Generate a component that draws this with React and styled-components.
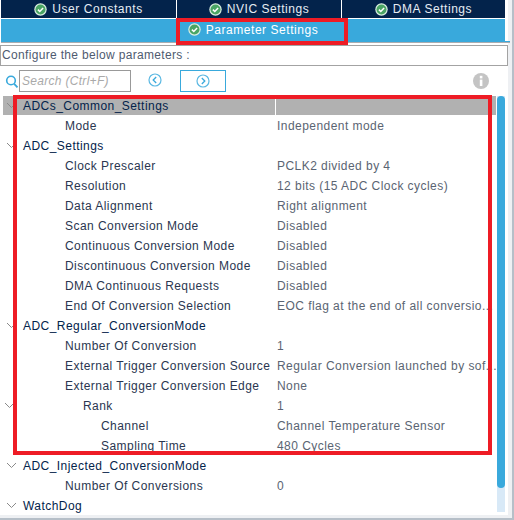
import React from 'react';
import styled, { createGlobalStyle } from 'styled-components';

const GlobalStyle = createGlobalStyle`
  html, body {
    margin: 0;
    padding: 0;
    background: #fff;
  }
`;

const Page = styled.div`
  position: relative;
  width: 514px;
  height: 520px;
  overflow: hidden;
  background: #fff;
  font-family: "Liberation Sans", Arial, sans-serif;
  font-size: 13px;
  display: flex;
  flex-direction: column;
`;

const Outer = styled.div`
  width: 514px;
  height: 520px;
  background: #eef0f3;
  border-bottom: 2px solid #b6bfc8;
  border-right: 2px solid #b6bfc8;
  box-sizing: border-box;
`;

const Frame = styled.div`
  width: 508px;
  height: 515px;
  display: flex;
  flex-direction: column;
  background: #fff;
  flex: none;
`;

const TopTabs = styled.div`
  height: 19px;
  margin-left: 1px;
  width: 504px;
  display: grid;
  grid-template-columns: 175px 165px 164px;
  background: #03234b;
  border-bottom: 1px solid #fff;
  box-sizing: border-box;
`;

const TopTab = styled.div`
  display: flex;
  align-items: center;
  justify-content: center;
  gap: 5px;
  color: #e6edf3;
  letter-spacing: 0.55px;
  font-size: 12px;
  border-left: ${p => (p.$first ? 'none' : '1px solid #fff')};
`;

const SubTabs = styled.div`
  height: 22px;
  margin-left: 1px;
  width: 504px;
  background: #39a9dc;
  display: flex;
  justify-content: center;
  align-items: center;
  color: #fff;
  font-size: 12px;
  letter-spacing: 0.55px;
  padding-bottom: 1px;
  box-sizing: border-box;
  flex: none;
`;

const SubTabInner = styled.div`
  display: flex;
  align-items: center;
  gap: 5px;
`;

const BlueEdge = styled.div`
  height: 2px;
  width: 509px;
  margin-left: 1px;
  background: linear-gradient(#39a9dc 50%, #a9acb0 50%);
  flex: none;
`;

const Rule = styled.div`
  height: 2px;
  background: #fff;
  flex: none;
`;

const ConfigBox = styled.div`
  height: 21px;
  width: 508px;
  box-sizing: border-box;
  border: 1px solid #a3a3a3;
  color: #4f5b70;
  font-size: 12px;
  letter-spacing: 0.33px;
  line-height: 19px;
  padding-left: 1px;
  flex: none;
`;

const Toolbar = styled.div`
  height: 30px;
  display: flex;
  align-items: center;
  padding-left: 5px;
  flex: none;
`;

const SearchBox = styled.div`
  width: 112px;
  height: 22px;
  margin-left: 0;
  box-sizing: border-box;
  border: 1px solid #999;
  color: #a9a9a9;
  font-style: italic;
  font-size: 12px;
  letter-spacing: 0.3px;
  line-height: 20px;
  padding-left: 2px;
`;

const PrevButton = styled.div`
  width: 16px;
  height: 16px;
  margin-left: 17px;
  display: flex;
`;

const NextButton = styled.div`
  width: 46px;
  height: 22px;
  margin-left: 16px;
  box-sizing: border-box;
  border: 1px solid #39a9dc;
  display: flex;
  align-items: center;
  justify-content: center;
`;

const InfoIcon = styled.div`
  margin-left: auto;
  margin-right: 19px;
  width: 16px;
  height: 16px;
  display: flex;
`;

const TableArea = styled.div`
  flex: 1;
  min-height: 0;
  display: flex;
`;

const TreeColumn = styled.div`
  width: 496px;
  overflow: hidden;
  padding-left: 3px;
  box-sizing: border-box;
  height: 419px;
  flex: none;
`;

const Row = styled.div`
  height: 20px;
  display: grid;
  grid-template-columns: 272px 1fr;
  align-items: start;
  background: ${p => (p.$selected ? 'linear-gradient(#b1b1b1 19px, transparent 19px)' : 'transparent')};
`;

const NameCell = styled.div`
  position: relative;
  height: 20px;
  line-height: 20px;
  padding-left: ${p => [20, 62, 80, 98][p.$level]}px;
  color: ${p => (p.$level === 0 ? '#03234b' : '#2a3650')};
  font-size: 12px;
  letter-spacing: 0.45px;
  white-space: nowrap;
`;

const ValueCell = styled.div`
  height: 19px;
  line-height: 20px;
  padding-left: 1px;
  border-left: ${p => (p.$selected ? '1px solid #fff' : '1px solid transparent')};
  color: #5a6472;
  font-size: 12px;
  letter-spacing: 0.45px;
  white-space: nowrap;
  overflow: hidden;
`;

const Caret = styled.svg`
  position: absolute;
  left: ${p => p.$left}px;
  top: 6px;
`;

const ScrollTrack = styled.div`
  width: 8px;
  margin-left: 1px;
  height: 416px;
  background: #d8e9f7;
  flex: none;
`;

const ScrollThumb = styled.div`
  height: 392px;
  background: #39a9dc;
  border-radius: 4px;
`;

const Highlight = styled.div`
  position: absolute;
  left: ${p => p.$x}px;
  top: ${p => p.$y}px;
  width: ${p => p.$w}px;
  height: ${p => p.$h}px;
  box-sizing: border-box;
  border: 4px solid #ee1c25;
  pointer-events: none;
`;

const Check = () => (
  <svg width="13" height="13" viewBox="0 0 13 13">
    <circle cx="6.5" cy="6.5" r="6.2" fill="#dcefe2" />
    <circle cx="6.5" cy="6.5" r="5" fill="#4aa564" />
    <path d="M3.9 6.6 L5.8 8.5 L9.1 4.9" fill="none" stroke="#fff" strokeWidth="1.5" />
  </svg>
);

const SearchIcon = () => (
  <svg width="14" height="15" viewBox="0 0 14 15">
    <circle cx="6" cy="6.5" r="4.3" fill="none" stroke="#39a9dc" strokeWidth="1.6" />
    <path d="M9.2 9.8 L12.5 13.3" stroke="#39a9dc" strokeWidth="1.8" />
  </svg>
);

const Nav = ({ dir }) => (
  <svg width="14" height="14" viewBox="0 0 14 14">
    <circle cx="7" cy="7" r="6" fill="none" stroke="#5bb8e2" strokeWidth="1.2" />
    <path d={dir === 'left' ? 'M8.2 4 L5.2 7 L8.2 10' : 'M5.8 4 L8.8 7 L5.8 10'} fill="none" stroke="#39a9dc" strokeWidth="1.3" />
  </svg>
);

const Info = () => (
  <svg width="16" height="16" viewBox="0 0 16 16">
    <circle cx="8" cy="8" r="8" fill="#c4c4c4" />
    <rect x="6.8" y="2.8" width="2.6" height="2.6" fill="#fff" />
    <rect x="6.8" y="6.6" width="2.6" height="6.4" fill="#fff" />
  </svg>
);

const rows = [
  { name: 'ADCs_Common_Settings', level: 0, caret: true, selected: true },
  { name: 'Mode', value: 'Independent mode', level: 1 },
  { name: 'ADC_Settings', level: 0, caret: true },
  { name: 'Clock Prescaler', value: 'PCLK2 divided by 4', level: 1 },
  { name: 'Resolution', value: '12 bits (15 ADC Clock cycles)', level: 1 },
  { name: 'Data Alignment', value: 'Right alignment', level: 1 },
  { name: 'Scan Conversion Mode', value: 'Disabled', level: 1 },
  { name: 'Continuous Conversion Mode', value: 'Disabled', level: 1 },
  { name: 'Discontinuous Conversion Mode', value: 'Disabled', level: 1 },
  { name: 'DMA Continuous Requests', value: 'Disabled', level: 1 },
  { name: 'End Of Conversion Selection', value: 'EOC flag at the end of all conversio...', level: 1 },
  { name: 'ADC_Regular_ConversionMode', level: 0, caret: true },
  { name: 'Number Of Conversion', value: '1', level: 1 },
  { name: 'External Trigger Conversion Source', value: 'Regular Conversion launched by sof...', level: 1 },
  { name: 'External Trigger Conversion Edge', value: 'None', level: 1 },
  { name: 'Rank', value: '1', level: 2, caret: true, caretLeft: 1 },
  { name: 'Channel', value: 'Channel Temperature Sensor', level: 3 },
  { name: 'Sampling Time', value: '480 Cycles', level: 3 },
  { name: 'ADC_Injected_ConversionMode', level: 0, caret: true },
  { name: 'Number Of Conversions', value: '0', level: 1 },
  { name: 'WatchDog', level: 0, caret: true },
];

const App = () => (
  <>
    <GlobalStyle />
    <Page>
      <Outer>
        <Frame>
          <TopTabs>
            <TopTab $first><Check />User Constants</TopTab>
            <TopTab><Check />NVIC Settings</TopTab>
            <TopTab><Check />DMA Settings</TopTab>
          </TopTabs>
          <SubTabs>
            <SubTabInner><Check />Parameter Settings</SubTabInner>
          </SubTabs>
          <BlueEdge />
          <Rule />
          <ConfigBox>Configure the below parameters :</ConfigBox>
          <Toolbar>
            <SearchIcon />
            <SearchBox>Search (Ctrl+F)</SearchBox>
            <PrevButton><Nav dir="left" /></PrevButton>
            <NextButton><Nav dir="right" /></NextButton>
            <InfoIcon><Info /></InfoIcon>
          </Toolbar>
          <TableArea>
            <TreeColumn>
              {rows.map(r => (
                <Row key={r.name} $selected={r.selected}>
                  <NameCell $level={r.level}>
                    {r.caret && (
                      <Caret $left={r.caretLeft ?? 3} width="11" height="7" viewBox="0 0 11 7">
                        <path d="M1 1 L5.5 5.5 L10 1" fill="none" stroke="#8a8a8a" strokeWidth="1" />
                      </Caret>
                    )}
                    {r.name}
                  </NameCell>
                  <ValueCell $selected={r.selected}>{r.value}</ValueCell>
                </Row>
              ))}
            </TreeColumn>
            <ScrollTrack><ScrollThumb /></ScrollTrack>
          </TableArea>
        </Frame>
      </Outer>
      <Highlight $x={176} $y={18} $w={172} $h={27} />
      <Highlight $x={13} $y={95} $w={479} $h={360} />
    </Page>
  </>
);

export default App;
